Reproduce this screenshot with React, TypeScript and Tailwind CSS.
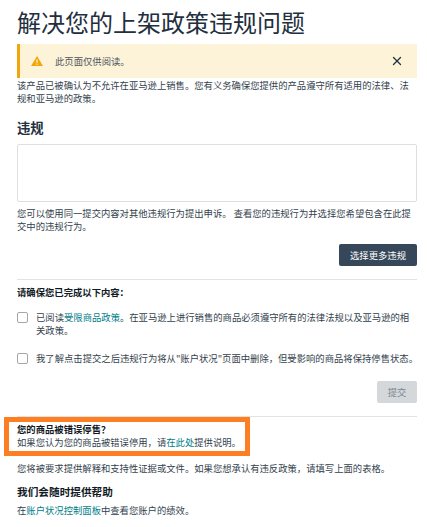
import { X } from 'lucide-react'

const font = { fontFamily: '"Noto Sans CJK SC", "Noto Sans", sans-serif' }

function CheckRow({ nowrap, children }: { nowrap?: boolean; children: React.ReactNode }) {
  return (
    <div className="flex items-start gap-[8px]">
      <div className="mt-[1px] w-[11px] h-[11px] shrink-0 bg-white border border-[#a6a6a6] rounded-[2px]" />
      <p className={nowrap ? 'flex-1 whitespace-nowrap' : 'flex-1'}>{children}</p>
    </div>
  )
}

export default function App() {
  return (
    <div className="w-[427px] h-[527px] overflow-hidden bg-white pl-[17px] pr-[10px] pt-[6px] text-[9.33px] leading-[13px] text-[#333f4d]" style={font}>
      <h1 className="text-[24px] leading-[32px] font-normal text-[#232f3e]">解决您的上架政策违规问题</h1>

      <div className="mt-[6px] h-[34px] flex items-center bg-[#fdf3d8] border-l-[3px] border-[#f2a60c] pl-[11px] pr-[13px]">
        <svg viewBox="0 0 12 10" className="w-[12px] h-[10px]">
          <path d="M6 0 L12 10 L0 10 Z" fill="#f2a60c" />
          <rect x="5.4" y="3.4" width="1.2" height="3.4" fill="#fdf3d8" />
          <rect x="5.4" y="7.6" width="1.2" height="1.2" fill="#fdf3d8" />
        </svg>
        <span className="ml-[12px] flex-1 text-[#4d5560]">此页面仅供阅读。</span>
        <X className="w-[14px] h-[14px] text-[#232f3e]" strokeWidth={2.2} />
      </div>

      <p className="mt-[1px]">该产品已被确认为不允许在亚马逊上销售。您有义务确保您提供的产品遵守所有适用的法律、法规和亚马逊的政策。</p>

      <h2 className="mt-[14px] text-[13.33px] leading-[18px] font-bold text-[#232f3e]">违规</h2>

      <div className="mt-[7px] h-[58px] border border-[#dcdfe3] rounded-[2px]" />

      <p className="mt-[5px]">您可以使用同一提交内容对其他违规行为提出申诉。 查看您的违规行为并选择您希望包含在此提交中的违规行为。</p>

      <div className="mt-[11px] flex justify-end">
        <button className="w-[78px] h-[22px] bg-[#37475a] text-white rounded-[2px] text-[9.33px]">选择更多违规</button>
      </div>

      <div className="mt-[13px] border-t border-[#e3e3e3]" />

      <p className="mt-[6px] font-bold text-[#111a24]">请确保您已完成以下内容：</p>

      <div className="mt-[12px]">
        <CheckRow>
          已阅读<span className="text-[#007d8a]">受限商品政策</span>。在亚马逊上进行销售的商品必须遵守所有的法律法规以及亚马逊的相关政策。
        </CheckRow>
      </div>
      <div className="mt-[15px]">
        <CheckRow nowrap>我了解点击提交之后违规行为将从"账户状况"页面中删除，但受影响的商品将保持停售状态。</CheckRow>
      </div>

      <div className="mt-[16px] flex justify-end">
        <button className="w-[40px] h-[22px] bg-[#d5d8db] text-[#7c8791] rounded-[2px] text-[9.33px]">提交</button>
      </div>

      <div className="mt-[13px] border-t border-[#e3e3e3]" />

      <div className="ml-[-13px] w-[246px] h-[39px] border-[5px] border-[#fd7e23] pl-[8px] pt-[1px]">
        <p className="font-bold text-[#111a24]">您的商品被错误停售？</p>
        <p>如果您认为您的商品被错误停用，请<span className="text-[#007d8a]">在此处</span>提供说明。</p>
      </div>

      <p className="mt-[6px]">您将被要求提供解释和支持性证据或文件。如果您想承认有违反政策，请填写上面的表格。</p>

      <h3 className="mt-[10px] text-[10.67px] leading-[14px] font-bold text-[#111a24]">我们会随时提供帮助</h3>

      <p className="mt-[5px]">在<span className="text-[#007d8a]">账户状况控制面板</span>中查看您账户的绩效。</p>
    </div>
  )
}
